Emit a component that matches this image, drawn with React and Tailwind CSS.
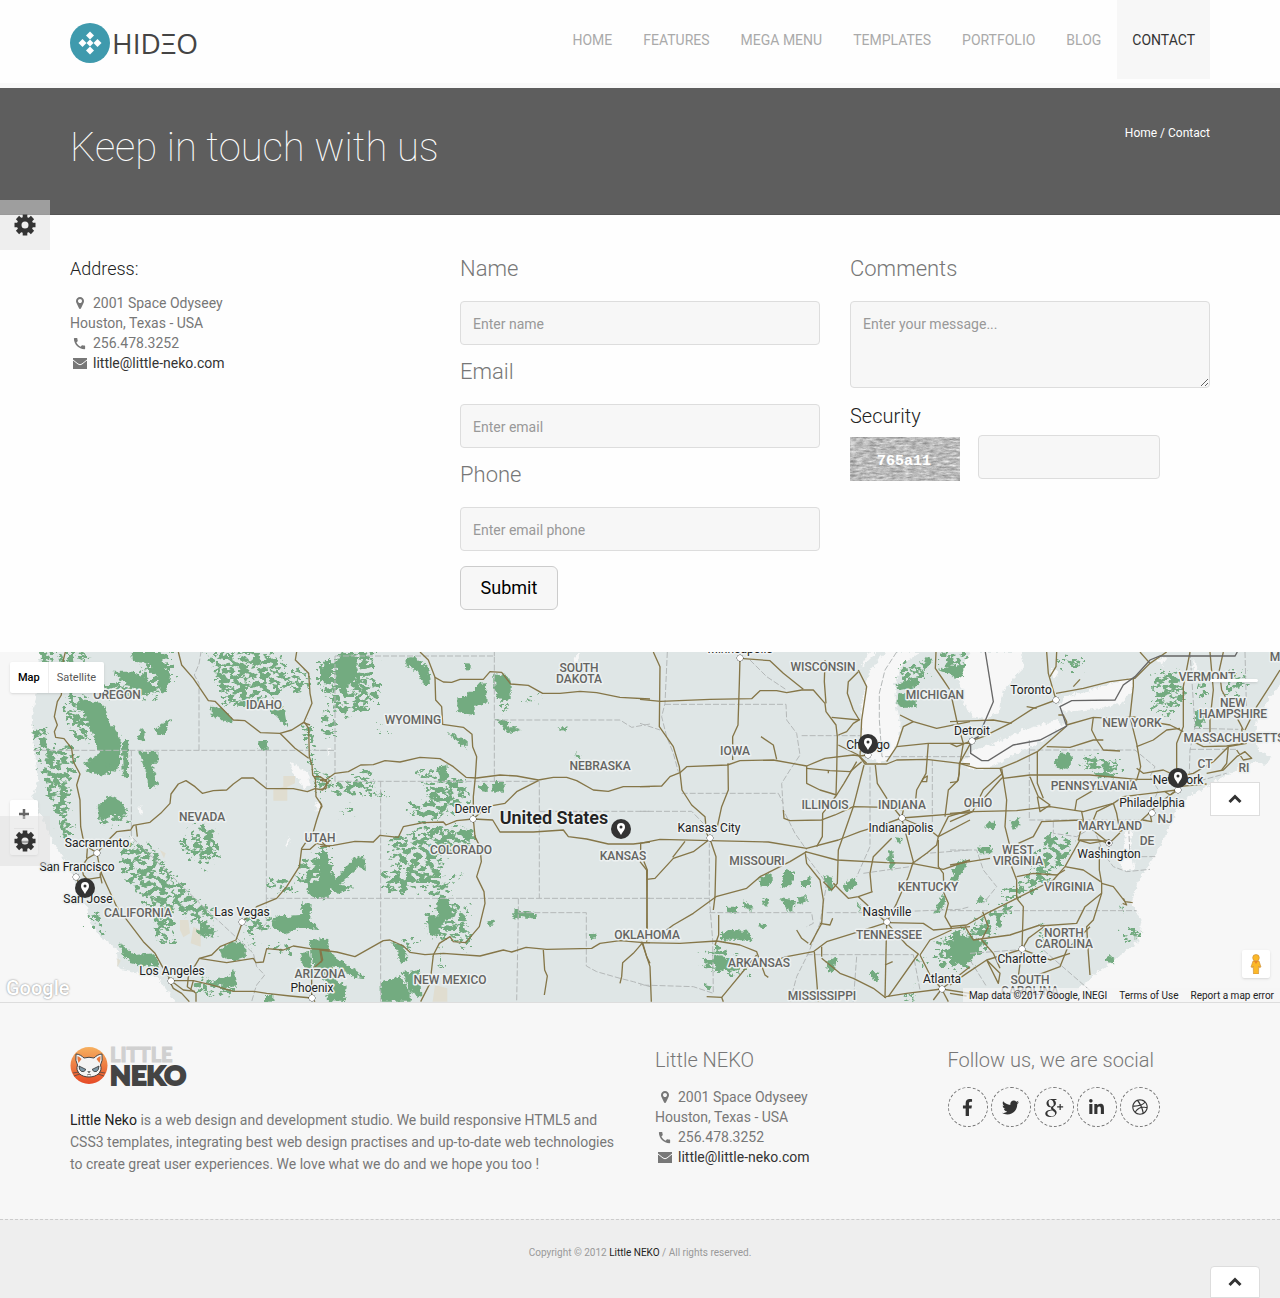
import React from "react";
import {
  FaDribbble,
  FaFacebookF,
  FaLinkedinIn,
  FaTwitter,
} from "react-icons/fa";
import { MdCall } from "react-icons/md";
import { TiSocialGooglePlus } from "react-icons/ti";

const NAV = ["HOME", "FEATURES", "MEGA MENU", "TEMPLATES", "PORTFOLIO", "BLOG", "CONTACT"];

/* Terrain is split into four tiles; each tile has its own origin on a 3840-wide grid. */
const TILES = [
  {
    x: 0,
    roads: [
      "196,36 190,60 188,110 184,165 172,185 163,230 172,255 163,275 167,292 192,296 215,325 220,365 240,402 230,435 240,480 242,560 250,600 270,625 291,639",
      "291,639 325,600 350,575 392,570 400,556 450,547 482,520 510,490 513,462 535,432 558,422 585,440 607,460 640,452 680,450 700,432 725,414 760,414 800,446 880,446 922,455 945,446 968,450 982,430 990,420",
      "535,36 545,75 580,115 625,182 645,184 700,240 735,242 782,278 840,280 875,270 910,248 930,255",
      "890,36 886,60 926,100 930,160 936,190 912,245 926,265 928,350 936,375 938,405 946,415 948,470 965,495 950,540 940,575 905,625 898,680 860,740 830,775 770,800 727,847",
      "840,280 885,325 926,355",
      "940,410 960,410 982,425",
      "727,847 708,900 660,920 635,945 598,955 580,985 565,1010",
      "598,955 680,968 760,955 768,968 790,966 800,926 850,930 880,918 930,926 990,930",
      "291,639 300,690 320,735 350,800 430,905 465,940 490,985 513,1022 580,1022 640,1036 700,1054 760,1054 800,1060 870,1068 935,1074",
      "291,639 262,655 246,680 250,705 262,718 300,712 306,690",
      "228,710 240,740 255,750",
      "262,625 260,655",
      "300,700 306,730",
      "505,1015 520,1045 545,1060 568,1085",
      "513,1022 550,1050 585,1054",
      "565,1010 562,1040 588,1060 588,1085",
      "580,1022 572,1050",
      "903,628 930,628 950,610 990,620",
      "962,930 968,960 935,990 935,1074",
      "935,1074 945,1085",
      "408,556 412,590",
    ],
    borders: [
      "100,331 990,331",
      "597,331 597,130 583,105 597,72 603,36",
      "394,331 394,590 610,800 760,940 770,980 794,1005 770,1035 765,1050 755,1085",
      "799,331 799,775 990,775",
      "799,775 799,850 780,870",
    ],
    solid: [
      "340,95 400,95 430,110 445,105 445,125 475,150 440,165 400,145 370,120",
      "395,36 480,36 490,70 510,110 500,150 480,160 470,110 450,70 400,65",
      "635,200 670,205 690,225 698,250 665,240 635,225",
      "240,180 310,190 330,250 362,290 360,370 330,385 330,405 270,400 250,370 300,340 260,240",
      "315,370 355,372 350,395 318,392",
      "418,335 475,335 475,368 455,368 475,435 445,445 440,400 425,360",
      "412,300 425,268 435,265 432,305",
      "465,270 500,240 510,238 495,280 475,285",
      "366,300 385,300 384,415 368,410",
      "775,303 803,303 803,328 790,333 775,322",
      "805,210 850,195 862,262 838,240",
      "660,930 690,905 735,912 738,950 700,962 665,950",
      "925,735 990,700 990,770 940,772 920,755",
      "930,897 985,900 990,1000 945,1000 935,950",
      "900,940 930,935 940,1010 915,1000",
      "290,500 330,465 360,480 385,525 340,520 300,545",
      "635,1020 690,1010 700,990 712,1040 680,1040",
      "792,1065 820,1065 820,1085 792,1085",
      "825,830 900,825 910,790 935,790 930,840 958,870 900,865 850,880 810,860",
      "975,60 990,60 990,130 965,120",
      "600,860 645,865 640,890 605,885",
      "465,940 480,980 410,975 370,950 360,910 400,945",
    ],
    rough: [
      "120,36 190,36 175,100 130,110",
      "200,36 260,36 250,160 290,200 260,300 225,300 200,240 210,120",
      "400,36 510,36 510,140 470,165 360,170 300,150 370,110 440,90",
      "610,36 830,36 850,90 870,130 840,160 810,180 730,200 680,190 650,130 650,80",
      "95,255 130,260 150,320 225,325 215,400 205,450 200,520 220,590 190,590 160,500 140,440 120,370",
      "380,610 450,620 480,660 520,710 580,780 640,800 640,885 610,890 560,820 520,800 520,905 485,905 450,800 420,760 380,700 365,650",
      "540,610 600,555 645,570 650,640 610,680 560,640",
      "265,820 300,830 305,880 280,860",
      "730,820 800,820 810,870 760,870 765,930 750,900",
      "800,720 880,730 880,760 810,745",
      "890,680 950,640 990,620 990,710 910,740",
      "300,510 390,515 380,545 320,555",
      "905,260 940,260 935,400 925,330",
      "810,930 860,940 870,900",
      "590,1020 700,1030 690,1060 600,1060",
      "945,400 990,400 985,440 950,460",
      "860,90 930,95 900,170 880,160",
    ],
    sand: ["850,408 885,408 885,430 862,440 862,482 820,482 820,450 850,440", "540,840 565,840 570,880 550,892 540,870", "580,860 602,870 602,920 572,910", "480,630 497,640 492,655", "352,955 362,962 352,982"],
    lake: ["872,365 890,375 900,388 925,392 932,430 915,452 895,420 880,400", "415,495 425,500 430,530 418,515", "945,485 965,495 950,515", "868,592 872,600 860,622 856,612", "390,580 402,600 392,610"],
  },
  {
    x: 960,
    roads: [
      "0,420 20,418 45,400 85,395 122,375 160,374 195,362 240,366 300,352 360,356 400,380 438,412 470,414 540,405 590,408 655,420 700,412 740,412 770,422 820,450 865,454 910,440 990,440",
      "300,36 325,60 345,112 370,126 395,127 420,118 490,118 510,95 545,97 572,132 625,136 668,160 720,160 780,154 830,158 900,172 990,177",
      "345,112 347,180 365,200 368,253 430,262 456,283 458,320 470,350 466,412 460,470 460,537 465,590 480,620 484,665 470,710 492,755 495,790 478,860 437,908 400,905 390,890 358,910 340,945 330,1030 302,1085",
      "460,537 500,500 555,490 590,455 655,422",
      "460,537 518,540 540,576 640,576 730,570 745,590 800,597 865,612 940,612 990,606",
      "0,620 40,616 105,604 160,606 180,586 235,592 250,560 310,548 370,546 378,555 410,542 460,537",
      "0,930 50,936 105,950 190,902 210,900 250,918 270,937 315,944 370,940 480,948 550,930 575,936 618,922 680,928 815,925 840,910 900,902 970,908 990,908",
      "670,930 674,990 682,1008 673,1065",
      "962,612 962,640 982,690 980,905",
      "968,908 940,940 908,968 905,1010 900,1030",
      "968,908 980,950 990,970",
      "0,420 20,425 18,445 0,448",
      "0,485 6,500 0,508",
      "0,930 5,965 0,968",
      "0,600 20,620",
    ],
    borders: [
      "45,48 523,48 523,424",
      "45,48 45,424 658,424",
      "0,331 45,331",
      "182,424 182,1085",
      "523,240 900,240 935,262 990,252",
      "658,424 658,775",
      "658,514 990,514",
      "0,775 990,775",
      "595,775 595,818 590,1085",
      "595,818 799,818 799,978 830,995 900,1015 940,1025 990,1040",
      "523,36 523,48",
    ],
    solid: [
      "412,172 440,170 442,158 468,158 468,132 498,130 500,192 464,194 464,226 412,216",
      "435,70 452,70 452,88 435,88",
      "523,100 560,105 572,120 572,180 545,186 523,150",
      "517,426 554,426 554,458 517,458",
      "474,436 503,434 503,456 480,452",
      "255,55 285,50 325,85 330,135 312,135 290,95 260,75",
      "580,808 600,812 650,820 650,836 595,830 592,838 580,832",
      "800,880 830,878 830,895 812,898",
      "350,380 382,375 385,415 365,425",
      "380,275 415,290 440,300 440,328 405,300",
      "523,240 570,243 565,262 595,262 600,270 562,280 545,256",
      "712,262 740,262 736,276",
      "763,340 783,345 780,352 765,350",
      "500,845 522,842 510,862",
      "0,900 20,900 22,930 50,955 120,1000 135,1015 100,1010 40,975 50,1020 80,1040 75,1083 20,1080 30,1040 0,1000",
      "182,1030 240,1005 260,1040 272,1055 272,1085 182,1085",
      "245,1000 300,990 304,1070 275,1060",
      "350,775 385,780 400,835 370,840 350,890 328,880 322,825 355,830",
      "105,650 132,648 138,690 115,680 60,735 105,740 60,760 25,745 10,780 0,770 0,620 20,640 45,720",
      "210,905 250,918 265,960 240,970 235,935",
      "60,40 110,45 110,120 60,150 45,110",
      "0,80 30,90 30,130 0,125",
      "420,575 460,565 462,600 430,598",
    ],
    rough: [
      "50,36 165,36 160,110 185,150 150,200 80,230 40,200 0,130 0,70 50,70",
      "10,200 45,220 40,300 15,290",
      "35,430 100,420 155,380 160,460 40,465",
      "300,400 360,400 440,430 440,490 360,530 330,540 280,530 260,510 330,470",
      "200,600 260,590 330,560 430,560 460,620 370,640 370,740 420,700 370,780 300,740 240,760 190,740 190,700 230,690",
      "320,820 440,790 440,920 400,900 330,890",
      "165,455 215,470 170,475",
      "160,250 205,280 190,285",
      "600,190 670,155 640,180",
      "535,190 567,200 550,215",
      "250,900 305,905 260,920",
      "360,920 370,980 358,980",
      "50,515 100,515 95,522 55,522",
    ],
    sand: ["345,1035 382,1045 382,1085 338,1085"],
    lake: ["775,40 782,46 765,75 757,70", "22,320 35,325 25,345", "80,95 98,95 92,110"],
  },
  {
    x: 1920,
    roads: [
      "0,178 62,184 210,178 335,176 360,152 410,152 440,158 485,150 520,150 555,190 558,215 588,255 592,290 590,400 588,465",
      "300,55 298,130 294,255 278,290 278,360",
      "40,36 60,80 58,260 100,320 118,380 126,450 155,495 195,530 200,580 210,597",
      "300,55 390,62 430,100 490,148",
      "363,290 400,315 410,358",
      "0,440 65,438 90,410 120,398 140,380 262,375 300,362 400,360 500,378 555,355 640,345 660,348 685,345",
      "264,370 265,450 245,500 232,560",
      "0,610 60,598 210,602 385,606 500,625 595,600 660,575 740,550 785,534",
      "210,597 160,635 100,655 45,715 20,718",
      "0,665 20,690 22,900",
      "98,652 135,604",
      "210,597 228,650 225,770 220,810",
      "500,635 450,665 360,710 320,745 228,770 160,820 100,855 80,870",
      "0,908 120,910 230,903 300,915 350,935 375,1005 385,1012",
      "236,825 236,885 225,915",
      "5,905 30,980 34,1085",
      "350,945 255,1060 245,1072 200,1070",
      "245,1072 250,1085",
      "360,975 440,950 520,935 560,905 640,880 740,848",
      "510,915 545,850 550,780 540,720 500,670 496,640",
      "550,725 575,750 592,730 595,630 640,500 672,375",
      "523,935 530,1020 535,1085",
      "545,955 600,1000 640,1015 700,1045 738,1074",
      "496,635 590,660 740,668 815,670 910,688 990,660",
      "500,378 500,430 540,450 590,465 612,430 650,365",
      "500,385 570,392 630,395 665,365",
      "430,510 432,535 450,542 545,540 585,525 640,500 740,502 790,510 785,534",
      "590,465 548,520 547,590 530,620",
      "555,60 553,125 558,190",
      "655,90 680,140 665,240 660,350 680,370",
      "655,95 625,125 622,160 640,210 658,240",
      "575,232 658,240",
      "595,285 620,275 640,250 660,238",
      "595,315 655,345",
      "655,345 675,372 740,372 770,360 860,358 960,370 990,372",
      "740,365 770,320 865,310 990,310",
      "770,320 790,260 820,245 780,225",
      "820,245 890,265 990,245",
      "888,36 886,85 910,120 930,150 950,240 970,310 960,370",
      "706,375 712,430 750,490 785,534",
      "785,534 990,518",
      "785,534 870,570 895,590 905,570 925,530 990,510",
      "895,590 990,540",
      "785,534 820,665 805,710 770,790 740,848",
      "895,590 890,615 860,640 818,670",
      "895,600 895,680 910,700 912,760 925,790 915,830 935,865",
      "960,370 955,420 925,450 915,530",
      "865,310 858,400 830,450 825,500",
      "850,415 862,408 860,425 845,425 850,415",
      "740,848 850,850 880,870 935,865 990,860",
      "740,848 735,1074",
      "740,848 800,915 835,942 745,1070",
      "935,870 870,900 840,945",
      "840,945 870,1005 905,1047",
      "738,1070 800,1060 905,1047 990,1060",
      "905,1047 880,1080",
      "905,1047 925,1085",
      "905,1047 990,980",
      "580,730 600,750 625,775 655,770 698,755",
      "655,770 740,848",
      "695,755 690,700 700,650 755,595",
      "540,850 570,855 578,835",
      "545,920 545,950",
      "565,392 565,400",
      "735,975 758,965",
      "470,870 485,895 505,910",
    ],
    borders: [
      "82,36 75,190 65,230 80,290 100,340 115,395",
      "75,193 438,193 440,240 470,280 480,345 450,390 425,430 430,510 465,580 500,630",
      "125,460 415,460 430,490",
      "0,775 208,775 208,610",
      "0,514 155,514 190,550",
      "208,775 218,900 220,1060 160,1040 0,1035",
      "208,818 515,818 520,850 500,860",
      "330,60 380,110 440,150",
      "485,287 660,287",
      "690,380 690,620 650,710",
      "877,360 877,560",
      "650,950 640,1085",
      "500,944 820,944 840,1050",
      "560,818 700,818 960,808 990,800",
      "500,650 560,730 540,850 505,940 470,1010 450,1085",
      "670,700 740,690 810,680 860,640 990,630",
      "770,36 735,90 718,160 718,240 726,350 990,350",
      "0,250 60,270",
    ],
    solid: [
      "358,712 395,700 395,735 362,740",
      "430,700 440,690 462,695 462,720 440,745 425,740",
      "480,725 512,712 512,738 480,738",
      "420,775 465,780 460,810 445,815",
      "470,770 500,765 500,785 475,795",
      "240,880 270,870 325,872 338,905 300,900 240,898",
      "258,800 292,800 290,818 258,815",
      "308,780 340,800 335,812 310,800",
      "373,775 385,780 380,800 370,795",
      "357,850 380,855 375,865 357,862",
      "765,595 788,597 785,608 768,607",
      "745,625 760,640 765,680 755,695 745,670",
      "608,735 645,715 650,735 620,755",
      "553,705 580,715 575,755 560,740",
      "780,130 832,110 830,140 780,150 765,140",
      "775,160 830,160 830,200 790,205 772,195",
      "892,90 935,78 970,78 972,115 920,100",
      "560,965 590,950 585,990 565,998",
      "692,995 718,998 712,1028 700,1020",
      "960,665 978,660 972,690 940,740 925,735",
      "905,765 918,770 910,805 880,822 895,790",
      "218,940 265,955 305,985 280,995 230,990",
      "650,780 662,800 660,820",
      "860,50 875,62 862,85 850,80",
      "195,1035 215,1040 210,1048 195,1045",
    ],
    rough: [
      "185,960 240,920 320,970 320,1000 200,990",
      "885,920 920,890 990,880 990,980 900,980",
      "780,80 850,70 860,110 790,150",
      "900,36 990,50 970,80 900,75",
      "845,950 858,960 850,995",
      "790,1075 830,1035 820,1085",
    ],
    sand: [],
    lake: [
      "690,36 712,36 655,90",
      "735,36 690,90 675,150 664,200 666,300 690,350 720,372 750,350 775,310 782,250 768,190 765,130 790,70 840,36",
      "990,36 965,80 950,110 965,150 975,200 990,180",
    ],
  },
  {
    x: 2850,
    roads: [
      "290,36 295,100 318,180",
      "320,36 318,80 300,110",
      "318,180 250,205 180,250 100,290 66,302",
      "318,160 400,145 480,125 555,115 600,70 650,36",
      "0,245 80,242 130,240 185,250",
      "66,302 20,320 0,310",
      "66,302 45,340 28,370 28,400 22,425 0,428",
      "230,200 260,205",
      "370,140 390,118",
      "325,225 340,225 350,245 350,255 430,232 500,236 550,230 600,245 660,255 700,275",
      "28,370 80,385 150,385 200,365 262,335 350,258",
      "430,232 425,270 440,300 460,330 510,333",
      "290,320 360,322 430,300 460,300",
      "550,115 550,140 540,230 560,310 572,380 560,420",
      "720,36 700,140 700,260 680,310 680,410",
      "150,385 160,415 240,405 420,405 560,418 640,418",
      "158,400 100,450 68,515",
      "155,385 170,480 165,560 180,620 185,680 200,720 200,775",
      "68,515 200,512 300,500 400,515 490,490 520,470 600,460 680,450",
      "68,515 0,545",
      "68,515 0,520",
      "240,410 265,470 300,495 270,515 262,470",
      "262,335 262,430 280,475",
      "205,610 250,590 275,545 395,540 440,580 478,610",
      "395,515 400,540 385,600 420,610 478,600",
      "510,578 478,610",
      "430,540 440,515 490,490 500,520 510,575",
      "478,610 445,600 390,600 345,680 310,720 200,775",
      "448,620 448,690 455,730 455,760 430,840 410,860 415,940 420,1005",
      "455,730 490,740 525,785 548,788",
      "345,680 400,690 452,725",
      "200,710 250,700 320,705 345,690",
      "455,760 405,800 380,850 270,858",
      "200,775 220,800 216,925 205,1010",
      "0,860 50,855 110,820 200,775",
      "45,860 70,900 180,885 270,855",
      "0,1035 50,1000 110,960 216,928",
      "216,928 235,895 285,858",
      "98,815 115,860 95,900 130,940 150,985",
      "216,928 300,960 360,940",
      "110,960 145,1030 150,1000 110,960",
      "250,1010 330,980 350,930 420,860",
      "510,575 575,540 640,480 683,450",
      "600,520 605,545 578,540",
      "560,385 580,400 640,390 683,410 730,400 790,365 835,320 890,310",
      "700,290 760,320 830,318 880,310 875,265",
      "780,36 790,150 780,240 780,310",
      "820,36 808,90 815,150 870,250 880,270",
      "990,90 965,130 920,200 885,270",
      "860,330 880,360 905,355 885,335 860,350 820,390 770,400",
      "683,440 770,432",
      "570,36 600,70",
      "0,675 60,665 120,655",
      "560,320 610,300 650,270 690,265",
      "835,320 830,370 815,390",
      "645,455 660,465 680,450",
      "520,775 530,795 518,790",
      "375,510 380,480 440,445 500,430 560,420",
      "0,1060 50,1068",
      "80,500 150,420 160,410",
    ],
    borders: [
      "238,300 238,540 590,540",
      "238,330 555,330 615,380 600,410 625,450 600,510",
      "720,36 725,110 735,260 720,330 718,400",
      "735,265 865,268",
      "720,328 860,328",
      "0,812 560,812",
      "310,545 310,580 380,590 430,560 460,640 490,680 530,695 600,688",
      "885,36 890,230",
      "535,540 540,650 620,650",
      "0,630 80,630 100,690 140,740 100,790",
      "280,930 430,1060",
      "60,940 200,930",
      "60,960 110,1040",
      "680,410 740,425 830,400",
    ],
    solid: [
      "315,365 340,335 365,345 362,375 345,390 315,378",
      "85,620 120,618 125,640 88,640",
      "180,545 208,535 208,560 188,566",
      "115,545 135,545 132,570 105,562",
      "0,80 35,78 38,105 20,118 0,105",
      "465,955 480,945 497,960 490,970 465,965",
      "5,690 40,660 45,680 25,715",
      "75,795 90,765 110,780",
      "735,215 760,205 768,235 750,265 735,260",
      "0,905 60,890 100,905 60,970 0,970",
      "288,590 302,575 310,600 300,625 290,610",
      "510,800 520,800 518,818",
      "550,875 562,880 558,895",
    ],
    rough: [
      "400,345 510,370 510,400 450,410 400,380",
      "610,110 680,85 690,130 720,170 690,190 650,230 610,200",
      "370,600 345,660 290,720 200,780 140,780 230,720 260,640 310,610",
      "200,790 150,850 80,940 60,870 120,810",
      "740,130 765,130 765,180 745,165",
      "825,120 890,110 860,160 830,160",
      "0,880 100,860 100,920 40,980 0,980",
      "330,60 400,60 395,85 330,75",
      "290,590 380,600 320,660 280,640",
      "505,880 570,870 560,895 510,890",
      "850,90 875,90 870,120",
      "270,860 290,860 280,930",
    ],
    sand: [],
    lake: [
      "60,36 215,36 222,85 165,140 145,215 110,238 70,230 42,190 36,110",
      "328,205 345,170 440,145 545,112 552,135 520,190 430,208 350,215",
      "42,360 70,330 130,312 220,270 320,240 345,258 260,312 160,362 100,390 55,385",
      "306,85 325,95 318,120 305,110",
      "525,575 548,570 540,620 555,690 520,690 500,650 520,640",
      "730,60 745,80 738,130 728,110",
      "615,60 650,50 640,75",
    ],
  },
];

const STATES = [
  ["OREGON", 117, 699], ["IDAHO", 264, 709], ["WYOMING", 413, 724], ["SOUTH", 579, 672],
  ["DAKOTA", 579, 683], ["WISCONSIN", 823, 671], ["MICHIGAN", 935, 699], ["NEBRASKA", 600, 770],
  ["IOWA", 735, 755], ["NEVADA", 202, 821], ["UTAH", 320, 842], ["COLORADO", 461, 854],
  ["KANSAS", 623, 860], ["MISSOURI", 757, 865], ["ILLINOIS", 825, 809], ["INDIANA", 902, 809],
  ["OHIO", 978, 807], ["KENTUCKY", 928, 891], ["TENNESSEE", 889, 939], ["CALIFORNIA", 138, 917],
  ["ARIZONA", 320, 978], ["NEW MEXICO", 450, 984], ["OKLAHOMA", 647, 939], ["ARKANSAS", 759, 967],
  ["MISSISSIPPI", 822, 1000], ["VERMONT", 1207, 681], ["NEW", 1233, 707], ["HAMPSHIRE", 1233, 718],
  ["NEW YORK", 1132, 727], ["MASSACHUSETTS", 1234, 742], ["CT", 1205, 768], ["RI", 1244, 772],
  ["PENNSYLVANIA", 1094, 790], ["NJ", 1165, 823], ["MARYLAND", 1110, 830], ["DE", 1147, 845],
  ["WEST", 1018, 854], ["VIRGINIA", 1018, 865], ["VIRGINIA", 1069, 891], ["NORTH", 1064, 937],
  ["CAROLINA", 1064, 948], ["SOUTH", 1030, 984], ["CAROLINA", 1030, 995], ["M", 1275, 661],
];

/* name, label x, label baseline, dot x, dot y */
const CITIES = [
  ["Sacramento", 97, 847, 97, 853], ["San Francisco", 77, 871, 76, 877], ["San Jose", 88, 903],
  ["Las Vegas", 242, 916, 242, 922], ["Los Angeles", 172, 975, 171, 981], ["Phoenix", 312, 992, 312, 998],
  ["Denver", 473, 813, 473, 819], ["Kansas City", 709, 832, 710, 838], ["Chicago", 868, 749, 868, 755],
  ["Indianapolis", 901, 832, 902, 818], ["Nashville", 887, 916, 887, 922], ["Atlanta", 942, 983, 942, 989],
  ["Detroit", 972, 735, 972, 741], ["Toronto", 1031, 694, 1056, 700], ["New York", 1178, 784, 1178, 790],
  ["Philadelphia", 1152, 807, 1152, 813], ["Washington", 1109, 858, 1109, 843], ["Charlotte", 1022, 963, 1022, 949],
  ["Minneapolis", 740, 653, 740, 658],
];

const PINS = [[868, 744], [1178, 778], [621, 829], [85, 888]];

function Shapes({ items, ...rest }) {
  return (
    <g {...rest}>
      {items.map((points, i) => (
        <polygon key={i} points={points} />
      ))}
    </g>
  );
}

function Lines({ items, ...rest }) {
  return (
    <g fill="none" {...rest}>
      {items.map((points, i) => (
        <polyline key={i} points={points} />
      ))}
    </g>
  );
}

function Terrain() {
  return (
    <svg
      viewBox="0 0 1280 350"
      preserveAspectRatio="xMidYMid slice"
      className="block h-[350px] w-full"
      role="img"
      aria-label="Map of the United States"
      fontFamily="Roboto, sans-serif"
      textAnchor="middle"
    >
      <defs>
        <filter id="forest" x="-5%" y="-5%" width="110%" height="110%">
          <feTurbulence type="fractalNoise" baseFrequency="0.05 0.07" numOctaves="3" seed="4" result="n" />
          <feColorMatrix in="n" type="matrix" values="0 0 0 0 0  0 0 0 0 0  0 0 0 0 0  0 16 0 0 -7.2" result="m" />
          <feDisplacementMap in="SourceGraphic" in2="n" scale="70" xChannelSelector="R" yChannelSelector="B" result="d" />
          <feComposite in="d" in2="m" operator="in" />
        </filter>
        <filter id="ragged">
          <feTurbulence type="fractalNoise" baseFrequency="0.08" numOctaves="3" seed="9" />
          <feDisplacementMap in="SourceGraphic" scale="20" xChannelSelector="R" yChannelSelector="G" />
        </filter>
      </defs>
      <rect width="1280" height="350" fill="#f7f7f7" />
      <g transform="scale(0.33333) translate(0 -36)">
        <g fill="#dfe6e6" filter="url(#ragged)">
          <path d="M120 20 118 100 95 230 100 300 115 420 95 475 130 540 160 610 195 660 220 715 240 760 262 800 265 840 300 890 350 925 355 985 420 1000 470 1010 500 1050 540 1100H3190L3230 1050 3268 1020 3320 975 3370 940 3415 905 3425 840 3395 790 3415 720 3450 670 3490 600 3530 510 3550 480 3620 440 3690 400 3750 365 3800 372 3815 350 3780 335 3765 290 3770 240 3810 170 3860 110V20Z" />
        </g>
        {TILES.map((t) => (
          <g key={t.x} transform={`translate(${t.x} 0)`}>
            <Shapes items={t.lake} fill="#f7f7f7" filter="url(#ragged)" />
            <Shapes items={t.sand} fill="#e0ddd0" />
            <Shapes items={t.rough} fill="#73ab80" filter="url(#forest)" />
            <Shapes items={t.solid} fill="#73ab80" filter="url(#ragged)" />
          </g>
        ))}
        {TILES.map((t) => (
          <g key={t.x} transform={`translate(${t.x} 0)`}>
            <Lines items={t.borders} stroke="#b4b8b8" strokeWidth="3" strokeDasharray="18 6" />
            <Lines items={t.roads} stroke="#857648" strokeWidth="4" strokeLinejoin="round" />
          </g>
        ))}
        <Lines
          items={[
            "2956,36 2980,185 2935,290 2912,302 2912,340 2945,362 2965,362 3040,315 3120,300 3200,258 3180,200 3215,182 3345,180 3370,135 3405,110 3450,60 3480,48 3705,48 3712,36",
          ]}
          stroke="#666"
          strokeWidth="4"
        />
      </g>
      <g transform="translate(0 -652)" stroke="#edf1f1" strokeWidth="3" strokeLinejoin="round" paintOrder="stroke">
        <g fontSize="12" fontWeight="500" fill="#646461">
          {STATES.map(([name, x, y]) => (
            <text key={name + x + y} x={x} y={y}>{name}</text>
          ))}
        </g>
        <g fontSize="12" fill="#222">
          {CITIES.map(([name, x, y, cx, cy]) => (
            <g key={name}>
              {cx && <circle cx={cx} cy={cy} r="3" fill="#fff" stroke="#333" strokeWidth="1" />}
              {name === "Washington" && <circle cx={cx} cy={cy} r="1.500" stroke="none" />}
              <text x={x} y={y}>{name}</text>
            </g>
          ))}
        </g>
        <text x="554" y="824" fontSize="18" fontWeight="600" fill="#222">United States</text>
      </g>
      <g transform="translate(0 -652)">
        {PINS.map(([x, y]) => (
          <g key={x} transform={`translate(${x} ${y})`}>
            <circle r="10" fill="#333" />
            <path d="M0 6C-2 2-4 1-4-2A4 4 0 1 1 4-2C4 1 2 2 0 6Z" fill="#fff" />
            <circle cy="-2" r="1.500" fill="#333" />
          </g>
        ))}
      </g>
    </svg>
  );
}

function PinIcon() {
  return (
    <svg viewBox="0 256 1024 1536" className="h-3 w-2" fill="currentColor" fillRule="evenodd" aria-hidden="true">
      <path d="M768 768q0 106-75 181t-181 75-181-75-75-181 75-181 181-75 181 75 75 181zm256 0q0 109-33 179l-364 774q-16 33-47 52t-68 19-68-19-46-52l-365-774q-33-70-33-179 0-212 150-362t362-150 362 150 150 362z" />
    </svg>
  );
}

function MailIcon() {
  return (
    <svg viewBox="0 0 14 11" className="h-[11px] w-3.5" aria-hidden="true">
      <path d="M0 0h14v11H0z" fill="currentColor" />
      <path d="M0 2l5 4q2 1.500 4 0l5-4" fill="none" stroke="#fafafa" />
    </svg>
  );
}

function Address() {
  return (
    <address className="text-sm leading-5 text-[#777] not-italic">
      <p className="flex items-center gap-1">
        <span className="flex w-[19px] justify-center"><PinIcon /></span>2001 Space Odyseey
      </p>
      <p>Houston, Texas - USA</p>
      <p className="flex items-center gap-1">
        <span className="flex w-[19px] justify-center"><MdCall className="size-[15px]" /></span>256.478.3252
      </p>
      <p className="flex items-center gap-1">
        <span className="flex w-[19px] justify-center"><MailIcon /></span>
        <a href="#mail" className="text-[#333]">little@little-neko.com</a>
      </p>
    </address>
  );
}

function Field({ id, label, type, placeholder }) {
  return (
    <div className="mb-3.5">
      <label htmlFor={id} className="mb-[19px] block text-[22px] leading-[26px] font-light text-[#777]">{label}</label>
      <input
        id={id}
        type={type}
        placeholder={placeholder}
        className="block h-11 w-full rounded border border-[#ddd] bg-[#f7f7f7] px-3 pt-0.5 text-sm placeholder:text-[#999]"
      />
    </div>
  );
}

function GearButton({ className }) {
  return (
    <button
      type="button"
      aria-label="Settings"
      className={`absolute left-0 z-10 flex size-[50px] items-center justify-center bg-[#ddd]/50 text-[#333] ${className}`}
    >
      <svg viewBox="-11 -11 22 22" className="size-[22px]" fill="none" stroke="currentColor" aria-hidden="true">
        <circle r="5.800" strokeWidth="4.600" />
        <path d="M0-7V-10.500M0 7V10.500M-7 0H-10.500M7 0H10.500M5-5L7.500-7.500M-5-5L-7.500-7.500M5 5L7.500 7.500M-5 5L-7.500 7.500" strokeWidth="4.600" />
      </svg>
    </button>
  );
}

function TopButton({ className }) {
  return (
    <button
      type="button"
      aria-label="Back to top"
      className={`absolute right-5 flex w-[50px] items-center justify-center border border-[#ddd] bg-white text-[#333] ${className}`}
    >
      <svg viewBox="0 0 14 10" className="h-2.5 w-3.5" aria-hidden="true">
        <path d="M1.500 8L7 2.500 12.500 8" fill="none" stroke="currentColor" strokeWidth="3" />
      </svg>
    </button>
  );
}

function HideoLogo() {
  return (
    <a href="#home" className="flex items-center gap-0.5 font-['Open_Sans',sans-serif] text-[28px] leading-[42px] text-[#444]">
      <svg viewBox="0 0 40 40" className="size-10" aria-hidden="true">
        <circle cx="20" cy="20" r="20" fill="#3f9aad" />
        <g fill="#fff">
          <path d="M20 8.500l4 4-4 4-4-4zM20 23.500l4 4-4 4-4-4zM12.500 16l4 4-4 4-4-4zM27.500 16l4 4-4 4-4-4z" />
          <path d="M20 16.500l3.500 3.500-3.500 3.500-3.500-3.500z" />
        </g>
      </svg>
      <span>HIDΞO</span>
    </a>
  );
}

function NekoLogo() {
  return (
    <div className="flex h-10 gap-0.5 font-['Lato',sans-serif] font-black">
      <svg viewBox="0 0 38 38" className="size-[38px]" aria-hidden="true">
        <defs>
          <linearGradient id="neko" x1="0" y1="0" x2="0" y2="1">
            <stop offset="0" stopColor="#f6b05f" />
            <stop offset="1" stopColor="#e64a26" />
          </linearGradient>
        </defs>
        <circle cx="19" cy="18.500" r="18.500" fill="url(#neko)" />
        <path d="M6 7C9 7 12 9 14 11Q19 9.500 24 11C26 9 29 7 32 7Q33 14 30.500 18C33 25 27 30 19 30S5 25 7.500 18Q5 14 6 7Z" fill="#f4f4f4" stroke="#444" strokeWidth="1" />
        <path d="M7.500 9Q10 10 11.500 12L8.500 16Q7 12 7.500 9ZM30.500 9Q28 10 26.500 12L29.500 16Q31 12 30.500 9Z" fill="#e9783c" />
        <path d="M9 19l7 3.500q-2 3-4.500 2Q9 23 9 19ZM29 19l-7 3.500q2 3 4.500 2Q29 23 29 19Z" fill="#7d97a6" stroke="#333" strokeWidth=".8" />
        <path d="M17.800 24.500h2.400L19 26ZM17 28q2-1.500 4 0M3 26l6-1M4 29l6-2M35 26l-6-1M34 29l-6-2" fill="none" stroke="#444" strokeWidth=".7" />
      </svg>
      <div>
        <div className="text-[20px] leading-[15px] text-[#d0d0d0] [-webkit-text-stroke:1px_#d0d0d0]">LITTLE</div>
        <div className="text-[27px] leading-[25px] text-[#444] [-webkit-text-stroke:2px_#444]">NEKO</div>
      </div>
    </div>
  );
}

const SOCIAL = [
  ["Facebook", FaFacebookF, "size-[17px]"],
  ["Twitter", FaTwitter, "size-[17px]"],
  ["Google Plus", TiSocialGooglePlus, "size-[29px]"],
  ["LinkedIn", FaLinkedinIn, "size-[17px]"],
  ["Dribbble", FaDribbble, "size-4"],
];

export default function App() {
  return (
    <div className="relative bg-[#fefefe] font-['Roboto',sans-serif] text-[#777]">
      <header className="h-[88px] border-b-[5px] border-[#f9f9f9]">
        <div className="mx-auto flex max-w-[1140px] items-start justify-between">
          <div className="pt-[22px]"><HideoLogo /></div>
          <nav className="flex gap-px">
            {NAV.map((item) => (
              <a
                key={item}
                href={`#${item.toLowerCase().replace(" ", "-")}`}
                className={`px-[15px] pt-0.5 text-sm leading-[77px] ${item === "CONTACT" ? "bg-[#f7f7f7] text-[#333]" : "text-[#aaa]"}`}
              >
                {item}
              </a>
            ))}
          </nav>
        </div>
      </header>

      <section className="border-b border-[#555] bg-[#5e5e5e] text-white">
        <div className="mx-auto flex h-[126px] max-w-[1140px] items-start justify-between">
          <h1 className="pt-9 text-[40px] leading-[48px] font-thin">Keep in touch with us</h1>
          <p className="pt-[35px] text-xs leading-5"><a href="#home">Home</a> / Contact</p>
        </div>
      </section>
      <GearButton className="top-[200px]" />

      <main className="mx-auto grid max-w-[1140px] grid-cols-3 gap-[30px] pt-[41px] pb-[42px]">
        <section>
          <h2 className="mb-[11px] text-lg leading-[26px] font-light text-[#222]">Address:</h2>
          <Address />
        </section>
        <form id="contact-form">
          <Field id="name" label="Name" type="text" placeholder="Enter name" />
          <Field id="email" label="Email" type="email" placeholder="Enter email" />
          <Field id="phone" label="Phone" type="tel" placeholder="Enter email phone" />
          <button type="submit" className="mt-[15px] block h-11 w-[98px] rounded-md border border-[#ccc] bg-[#f7f7f7] text-lg text-black">Submit</button>
        </form>
        <section>
          <label htmlFor="comments" className="mb-[19px] block text-[22px] leading-[26px] font-light text-[#777]">Comments</label>
          <textarea
            id="comments"
            form="contact-form"
            placeholder="Enter your message..."
            className="block h-[87px] w-full rounded border border-[#ddd] bg-[#f7f7f7] px-3 py-3 text-sm leading-5 placeholder:text-[#999]"
          />
          <label htmlFor="security" className="mt-4 mb-[7px] block text-xl leading-6 font-light text-[#222]">Security</label>
          <div className="flex gap-[18px]">
            <svg viewBox="0 0 110 44" className="mt-0.5 h-11 w-[110px]" role="img" aria-label="765a11">
              <filter id="grain" x="0" y="0" width="100%" height="100%" colorInterpolationFilters="sRGB">
                <feTurbulence type="fractalNoise" baseFrequency="0.15 0.5" numOctaves="4" seed="3" />
                <feColorMatrix type="matrix" values="0 .5 0 0 .48  0 .5 0 0 .48  0 .5 0 0 .48  0 0 0 0 1" />
              </filter>
              <rect width="110" height="44" filter="url(#grain)" />
              <text x="27" y="28" fontSize="15" fontWeight="700" fill="#fff" fontFamily="Liberation Mono, monospace">765a11</text>
            </svg>
            <input id="security" form="contact-form" type="text" className="h-11 w-[182px] rounded border border-[#ddd] bg-[#f7f7f7] px-3 text-sm" />
          </div>
        </section>
      </main>

      <section className="relative overflow-hidden">
        <Terrain />
        <div className="absolute top-2.5 left-2.5 flex h-[31px] rounded-xs bg-white text-[11px] shadow">
          <button type="button" className="border-r border-[#eee] px-2 pt-0.5 font-medium text-black">Map</button>
          <button type="button" className="px-2 pt-0.5 text-[#565656]">Satellite</button>
        </div>
        <div className="absolute top-[27px] right-[22px] h-[3px] w-[48px] rounded-xs bg-white shadow-sm" />
        <div className="absolute top-[148px] left-2.5 flex h-[55px] w-7 flex-col rounded-xs bg-white text-[#666] shadow">
          <button type="button" aria-label="Zoom in" className="flex h-7 items-center justify-center">
            <svg viewBox="0 0 10 10" className="size-2.5" aria-hidden="true"><path d="M5 0v10M0 5h10" stroke="currentColor" strokeWidth="2.500" /></svg>
          </button>
          <button type="button" aria-label="Zoom out" className="mx-1 flex h-[27px] items-center justify-center border-t border-[#e6e6e6]">
            <svg viewBox="0 0 10 10" className="size-2.5" aria-hidden="true"><path d="M0 5h10" stroke="currentColor" strokeWidth="2.500" /></svg>
          </button>
        </div>
        <GearButton className="top-[164px]" />
        <TopButton className="top-[130px] h-[34px]" />
        <div className="absolute bottom-1 left-1.5 text-[20px] leading-5 font-medium text-white [text-shadow:0_0_2px_#777]">Google</div>
        <button type="button" aria-label="Street view" className="absolute right-2.5 bottom-6 flex size-7 items-center justify-center rounded-xs bg-white shadow">
          <svg viewBox="0 0 14 20" className="h-5 w-3.5" aria-hidden="true">
            <path d="M4 7h6l2 6-1.500.5L9.800 12 9.500 20H4.500L4.200 12l-.7 1.500L2 13Z" fill="#fbb829" stroke="#c98a35" strokeWidth=".6" />
            <circle cx="7" cy="3.800" r="3.300" fill="#fbb829" stroke="#c98a35" strokeWidth=".6" />
            <path d="M5 7h4l-2 3Z" fill="#e8862a" />
          </svg>
        </button>
        <div className="absolute right-0 bottom-0 flex h-3.5 items-end gap-3 bg-[#f5f5f5]/70 px-1.5 text-[10px] leading-3 text-[#222]">
          <span>Map data ©2017 Google, INEGI</span>
          <a href="#terms">Terms of Use</a>
          <a href="#report">Report a map error</a>
        </div>
      </section>

      <footer className="relative">
        <div className="h-[217px] border-t border-[#ddd] bg-[#f7f7f7] pt-11">
          <div className="mx-auto grid max-w-[1170px] grid-cols-4">
            <div className="col-span-2 px-[15px]">
              <NekoLogo />
              <p className="mt-[22px] text-sm leading-[22px]">
                <a href="#neko" className="text-[#222]">Little Neko</a> is a web design and development studio. We build responsive HTML5 and CSS3 templates, integrating best web design practises and up-to-date web technologies to create great user experiences. We love what we do and we hope you too !
              </p>
            </div>
            <div className="px-[15px]">
              <h2 className="mb-3.5 text-xl leading-[26px] font-light">Little NEKO</h2>
              <Address />
            </div>
            <div className="px-[15px]">
              <h2 className="mb-3.5 text-xl leading-[26px] font-light">Follow us, we are social</h2>
              <div className="flex gap-[3px]">
                {SOCIAL.map(([name, Icon, size]) => (
                  <a key={name} href={`#${name.toLowerCase().replace(" ", "-")}`} aria-label={name} className="flex size-10 items-center justify-center rounded-full border border-dashed border-[#777] text-[#333]">
                    <Icon className={size} />
                  </a>
                ))}
              </div>
            </div>
          </div>
        </div>
        <div className="h-[79px] border-t border-dashed border-[#ccc] bg-[#eee] pt-[23px] text-center text-[10px] leading-5 text-[#999]">
          Copyright © 2012 <a href="#neko" className="text-[#222]">Little NEKO</a> / All rights reserved.
        </div>
        <TopButton className="bottom-0 h-8 rounded-t" />
      </footer>
    </div>
  );
}
